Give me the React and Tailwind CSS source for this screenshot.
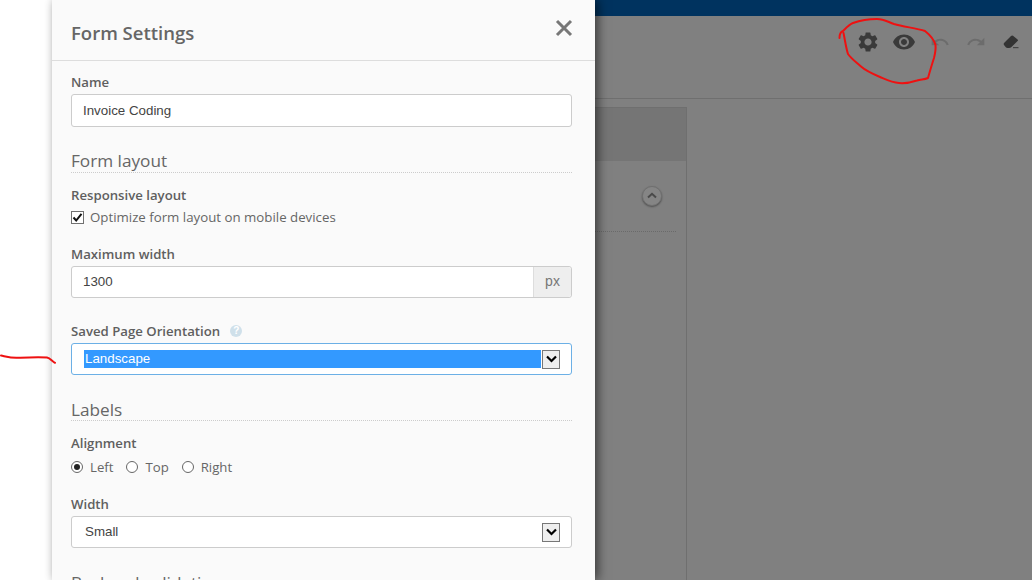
import React from "react";
import { MdSettings, MdVisibility, MdUndo, MdRedo } from "react-icons/md";

const Label = ({ className = "", children }) => (
  <div className={`h-[18px] text-[13.2px] leading-[18px] font-semibold text-[#5f5f5f] ${className}`}>{children}</div>
);

const Section = ({ className = "", children }) => (
  <div className={`border-b border-dotted border-[#ccc] text-[17.2px] leading-[23px] text-[#666] ${className}`}>{children}</div>
);

const Arrow = () => (
  <span className="ml-[1px] flex h-[19px] w-[18px] items-center justify-center border border-[#777] bg-[#eee]">
    <svg width="11" height="8" viewBox="0 0 11 8" fill="none" stroke="#000" strokeWidth="2.2">
      <path d="M1 1.5 L5.5 6 L10 1.5" />
    </svg>
  </span>
);

const Radio = ({ checked, label, className = "" }) => (
  <div className={`flex items-center ${className}`}>
    <span className="flex h-[12px] w-[12px] items-center justify-center rounded-full border border-[#666] bg-white">
      {checked && <span className="h-[6px] w-[6px] rounded-full bg-[#222]" />}
    </span>
    <span className="ml-[7px] text-[13.2px] leading-[18px] text-[#666]">{label}</span>
  </div>
);

const arial = "font-['Liberation_Sans',Arial,sans-serif]";

const Eraser = () => (
  <svg width="18" height="16" viewBox="0 0 18 16" fill="#333">
    <path d="M2 9 L9 2 Q10 1 11 1.8 L15.6 5.4 Q16.4 6.2 15.6 7 L9.5 13 Q8.5 14 7 14 L5.5 14 Q4.5 14 3.8 13.2 L2 11 Q1.4 10 2 9 Z" />
    <rect x="11" y="13" width="5.5" height="1.2" fill="#444" />
  </svg>
);

export default function App() {
  return (
    <div className="relative flex h-[580px] w-[1032px] overflow-hidden bg-white font-['Open_Sans',sans-serif]">
      <div className="w-[52px] shrink-0 bg-white" />

      <div className="relative z-10 h-[580px] w-[543px] shrink-0 overflow-hidden bg-[#fafafa] shadow-[3px_0_10px_rgba(0,0,0,0.55)]">
        <div className="flex h-[61px] items-center justify-between border-b border-[#ddd] pl-[19px] pr-[22px]">
          <h1 className="mt-[5px] text-[18.5px] font-semibold leading-[28px] text-[#666]">Form Settings</h1>
          <svg className="mt-[-5px]" width="18" height="18" viewBox="0 0 18 18" stroke="#777" strokeWidth="3" fill="none">
            <path d="M2 2 L16 16 M16 2 L2 16" />
          </svg>
        </div>

        <div className="w-[520px] pl-[19px]">
          <Label className="mt-[12px]">Name</Label>
          <div className={`mt-[3px] flex h-[33px] items-center rounded-[3px] border border-[#ccc] bg-white pl-[11px] text-[13.33px] text-[#444] ${arial}`}>
            Invoice Coding
          </div>

          <Section className="mt-[22px] h-[24px]">Form layout</Section>

          <Label className="mt-[13px]">Responsive layout</Label>
          <div className="mt-[4px] flex h-[18px] items-center">
            <span className="flex h-[13px] w-[13px] items-center justify-center border border-[#707070] bg-white">
              <svg width="11" height="11" viewBox="0 0 11 11" fill="none" stroke="#111" strokeWidth="2">
                <path d="M1.5 5.5 L4.2 8.5 L9.5 1.8" />
              </svg>
            </span>
            <span className="ml-[6px] text-[13.28px] leading-[18px] text-[#666]">Optimize form layout on mobile devices</span>
          </div>

          <Label className="mt-[19px]">Maximum width</Label>
          <div className="mt-[3px] flex h-[32px] rounded-[3px] border border-[#ccc] bg-white">
            <div className={`flex flex-1 items-center pb-[1px] pl-[11px] text-[13.33px] text-[#444] ${arial}`}>1300</div>
            <div className={`flex w-[38px] items-center justify-center rounded-r-[3px] border-l border-[#ddd] bg-[#eee] pb-[1px] text-[14px] text-[#777] ${arial}`}>px</div>
          </div>

          <Label className="mt-[24px] flex items-center">
            Saved Page Orientation
            <span className={`ml-[10px] flex h-[12px] w-[12px] items-center justify-center rounded-full bg-[#cfe0ea] text-[10px] font-bold leading-none text-white ${arial}`}>?</span>
          </Label>
          <div className="mt-[3px] flex h-[32px] items-center rounded-[3px] border border-[#6cb0e6] bg-white pl-[12px] pr-[11px]">
            <div className={`flex h-[18px] flex-1 items-center bg-[#3399ff] pl-[1px] text-[13.33px] text-white ${arial}`}>Landscape</div>
            <Arrow />
          </div>

          <Section className="mt-[23px] h-[23px]">Labels</Section>

          <Label className="mt-[13px]">Alignment</Label>
          <div className="mt-[6px] flex h-[18px] items-center">
            <Radio checked label="Left" />
            <Radio label="Top" className="ml-[13px]" />
            <Radio label="Right" className="ml-[13px]" />
          </div>

          <Label className="mt-[19px]">Width</Label>
          <div className="mt-[3px] flex h-[32px] items-center rounded-[3px] border border-[#ccc] bg-white pl-[13px] pr-[11px]">
            <div className={`flex-1 pb-[1px] text-[13.33px] text-[#444] ${arial}`}>Small</div>
            <Arrow />
          </div>

          <Section className="mt-[23px] h-[24px] border-b-0">Backend validation</Section>
        </div>
      </div>

      <div className="flex h-[580px] min-w-0 flex-1 flex-col bg-[#808080]">
        <div className="h-[16px] shrink-0 bg-[#00335f]" />
        <div className="flex h-[83px] shrink-0 justify-end border-b border-[#6f6f6f] pr-[3px] pt-[14px] text-[#3a3a3a]">
          <div className="flex h-[24px] w-[36px] items-center justify-center"><MdSettings size={24} /></div>
          <div className="flex h-[24px] w-[36px] items-center justify-center"><MdVisibility size={24} /></div>
          <div className="flex h-[24px] w-[36px] items-center justify-center"><MdUndo size={20} className="text-[#6c6c6c]" /></div>
          <div className="flex h-[24px] w-[35px] items-center justify-center"><MdRedo size={20} className="text-[#6c6c6c]" /></div>
          <div className="flex h-[24px] w-[36px] items-center justify-center"><Eraser /></div>
        </div>
        <div className="mt-[8px] h-[473px] w-[92px] border-r border-t border-[#6f6f6f]">
          <div className="h-[53px] bg-[#757575]" />
          <div className="mr-[10px] flex h-[71px] items-center justify-end border-b border-dotted border-[#6a6a6a] pr-[14px] pb-[1px]">
            <span className="flex h-[20px] w-[20px] items-center justify-center rounded-full border border-[#707070] bg-[#858585] shadow-[0_1px_2px_rgba(0,0,0,0.4)]">
              <svg width="10" height="7" viewBox="0 0 10 7" fill="none" stroke="#4a4a4a" strokeWidth="2">
                <path d="M1 5.5 L5 1.8 L9 5.5" />
              </svg>
            </span>
          </div>
        </div>
      </div>

      <svg className="pointer-events-none absolute left-0 top-0 z-20" width="1032" height="580" fill="none" stroke="#ee1111" strokeWidth="2" strokeLinecap="round" strokeLinejoin="round">
        <path d="M839.5 38 C839.5 34 840 32 843 31 M843 31 C846 28 849 24.5 853 23 C860 20.5 869 19 877 19 C884 19 888 22 894 24 C904 27 916 28 925 31 C930 35 934 39 935.5 45 C936 50 935 54 934 58 C932 64 930 71 928 78 C924 80 921 79 917 80.5 C911 82.5 905 83.5 899 83 C892 82.5 886 79.5 880 77 C873 74 866 71 861 66.5 C856 62 851 58.5 848 54 C846 48 845 40 843.5 33" />
        <path d="M1 355.5 C6 356.5 11 358 17 357.8 C26 357.5 37 357 47 357.5 C50 358 52 361 55 362.8" />
      </svg>
    </div>
  );
}
